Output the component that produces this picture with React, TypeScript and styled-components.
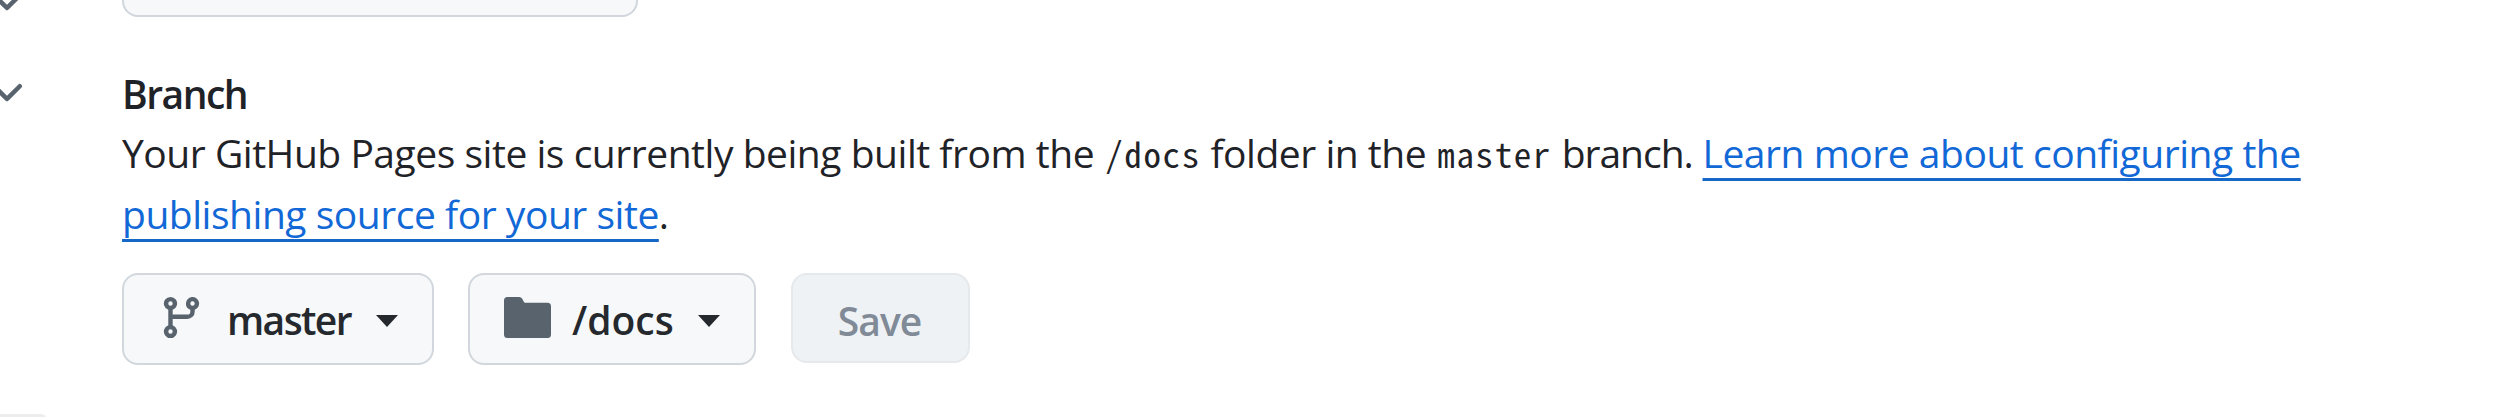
import React from "react";
import styled, { createGlobalStyle } from "styled-components";

const GlobalStyle = createGlobalStyle`
  body { margin: 0; background: #fff; }
  * { box-sizing: border-box; }
`;

const Page = styled.div`
  display: flex;
  height: 417px;
  overflow: hidden;
  background: #fff;
  color: #1f2328;
  font-family: "Open Sans", "Noto Sans", sans-serif;
  font-size: 39px;
`;

const SideRail = styled.aside`
  display: flex;
  flex-direction: column;
  flex: none;
  width: 122px;
  height: 417px;
  overflow: hidden;
`;

const Chevron = styled.svg<{ $gap: number }>`
  flex: none;
  width: 48px;
  height: 48px;
  margin-left: -17px;
  margin-top: ${(p) => p.$gap}px;
  fill: #59636e;
`;

const SidebarEdge = styled.div`
  flex: none;
  width: 46px;
  height: 3px;
  margin-top: auto;
  background: #ededee;
  border-top-right-radius: 6px 3px;
`;

const Content = styled.main`
  display: flex;
  flex-direction: column;
  align-items: flex-start;
  width: 2200px;
`;

const SourceSelect = styled.div`
  flex: none;
  width: 516px;
  height: 92px;
  margin-top: -75px;
  border: 2px solid #d1d7dc;
  border-radius: 16px;
  background: #f6f8fa;
`;

const Heading = styled.h4`
  margin: 48px 0 0;
  font-size: 39px;
  font-weight: 600;
  line-height: 58px;
  letter-spacing: -1.5px;
`;

const Description = styled.p`
  margin: 0;
  line-height: 60.7px;
  letter-spacing: -0.47px;
  white-space: nowrap;
`;

const Code = styled.code`
  margin-left: 1.5px;
  font-family: "Noto Sans Mono CJK SC", "Liberation Mono", monospace;
  font-size: 35px;
  line-height: 1;
  letter-spacing: 1.6px;
`;

const Tight = styled.span`
  letter-spacing: -1px;
`;

const Link = styled.a`
  color: #1168d6;
  text-decoration: underline;
  text-decoration-color: #1668c8;
  text-decoration-thickness: 3px;
  text-underline-offset: 10px;
  text-decoration-skip-ink: none;
`;

const Actions = styled.div`
  display: flex;
  align-items: flex-start;
  margin-top: 28.6px;
`;

const MenuButton = styled.button<{ $width: number; $gap: number; $spacing: number }>`
  display: flex;
  align-items: center;
  width: ${(p) => p.$width}px;
  height: 92px;
  margin: 0 34px 0 0;
  padding: 0 34px;
  border: 2px solid #d1d7dc;
  border-radius: 16px;
  background: #f6f8fa;
  color: #25292e;
  font: 600 39px "Open Sans", "Noto Sans", sans-serif;
  letter-spacing: ${(p) => p.$spacing}px;

  & > span {
    margin: 1px 0 0 ${(p) => p.$gap}px;
    line-height: 58px;
  }
`;

const Octicon = styled.svg`
  flex: none;
  width: 47px;
  height: 47px;
  margin-top: -4px;
  fill: #59636e;
`;

const Caret = styled.i`
  width: 0;
  height: 0;
  margin: 4px 0 0 auto;
  border: 11px solid transparent;
  border-top: 12px solid #25292e;
  border-bottom: 0;
`;

const SaveButton = styled.button`
  width: 179px;
  height: 90px;
  margin-left: 1px;
  padding: 5px 2px 0 0;
  border: 2px solid #e6e9ec;
  border-radius: 16px;
  background: #eff2f4;
  color: #818b98;
  font: 600 39px "Open Sans", "Noto Sans", sans-serif;
  letter-spacing: -1px;
`;

const CHEVRON =
  "M12.78 5.22a.749.749 0 0 1 0 1.06l-4.25 4.25a.749.749 0 0 1-1.06 0L3.22 6.28a.749.749 0 1 1 1.06-1.06L8 8.939l3.72-3.719a.749.749 0 0 1 1.06 0Z";

export default function App() {
  return (
    <>
      <GlobalStyle />
      <Page>
        <SideRail>
          <Chevron $gap={-22} viewBox="0 0 16 16"><path d={CHEVRON} /></Chevron>
          <Chevron $gap={43} viewBox="0 0 16 16"><path d={CHEVRON} /></Chevron>
          <SidebarEdge />
        </SideRail>
        <Content>
          <SourceSelect />
          <Heading>Branch</Heading>
          <Description>
            Your GitHub Pages site is currently being built from the <Code>/docs</Code> folder in the{" "}
            <Code>master</Code> <Tight>branch.</Tight> <Link>Learn more about configuring the</Link>
            <br />
            <Link>publishing source for your site</Link>.
          </Description>
          <Actions>
            <MenuButton $width={312} $gap={22} $spacing={-1.6}>
              <Octicon viewBox="0 0 16 16">
                <path d="M9.5 3.25a2.25 2.25 0 1 1 3 2.122V6A2.5 2.5 0 0 1 10 8.5H5v2.128a2.251 2.251 0 1 1-1.5 0V5.372a2.25 2.25 0 1 1 1.5 0V7h5a1 1 0 0 0 1-1v-.628A2.25 2.25 0 0 1 9.5 3.25Zm-6 0a.75.75 0 1 0 1.5 0 .75.75 0 0 0-1.5 0Zm8.25-.75a.75.75 0 1 0 0 1.5.75.75 0 0 0 0-1.5ZM4.25 12a.75.75 0 1 0 0 1.5.75.75 0 0 0 0-1.5Z" />
              </Octicon>
              <span>master</span>
              <Caret />
            </MenuButton>
            <MenuButton $width={288} $gap={21} $spacing={0}>
              <Octicon viewBox="0 0 16 16">
                <path d="M1.2 1A1.2 1.2 0 0 0 0 2.2v11.6A1.2 1.2 0 0 0 1.2 15h13.6A1.2 1.2 0 0 0 16 13.8V4.2A1.2 1.2 0 0 0 14.8 3H7.2a.4.4 0 0 1-.4-.25l-.6-1.1A1.2 1.2 0 0 0 5.1 1H1.2Z" />
              </Octicon>
              <span>/docs</span>
              <Caret />
            </MenuButton>
            <SaveButton disabled>Save</SaveButton>
          </Actions>
        </Content>
      </Page>
    </>
  );
}
